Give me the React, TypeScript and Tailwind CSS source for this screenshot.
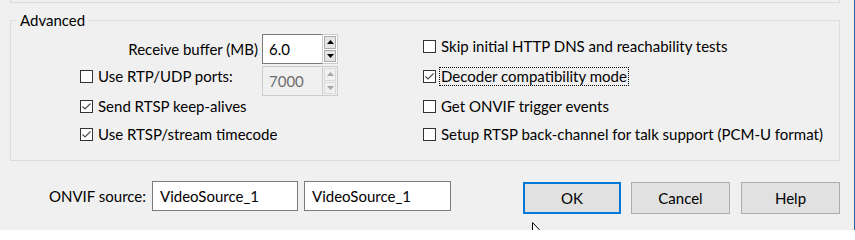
import React from "react";

const FONT = { fontFamily: "Lato, 'Noto Sans', sans-serif" };

function Check({ on }: { on?: boolean }) {
  return (
    <span className="flex h-[13px] w-[13px] shrink-0 items-center justify-center border border-[#333] bg-white">
      {on && (
        <svg width="11" height="11" viewBox="0 0 11 11">
          <polyline points="1.5,5.5 4,8 9.5,2.5" fill="none" stroke="#4d4d4d" strokeWidth="1.2" />
        </svg>
      )}
    </span>
  );
}

function CheckRow({ label, on, focus }: { label: string; on?: boolean; focus?: boolean }) {
  return (
    <div className="flex h-[20px] items-center gap-[3px] leading-[20px]">
      <Check on={on} />
      <span className={focus ? "border border-dotted border-black px-[1px] leading-[17px]" : "px-[2px]"}>{label}</span>
    </div>
  );
}

function Arrow({ up, color }: { up?: boolean; color: string }) {
  return (
    <svg width="7" height="4" viewBox="0 0 7 4">
      <polygon points={up ? "0,4 7,4 3.5,0" : "0,0 7,0 3.5,4"} fill={color} />
    </svg>
  );
}

function SpinBox({ value, disabled }: { value: string; disabled?: boolean }) {
  const edge = disabled ? "border-[#cccccc]" : "border-[#7a7a7a]";
  const btn = disabled ? "border-[#d9d9d9] bg-[#f0f0f0]" : "border-[#adadad] bg-[#e5e5e5]";
  return (
    <div className="flex h-[30px] w-[76px]">
      <div
        className={`flex flex-1 items-center border border-r-0 pl-[6px] ${edge} ${
          disabled ? "bg-[#f0f0f0] text-[#6d6d6d]" : "bg-white text-black"
        }`}
      >
        {value}
      </div>
      <div className={`flex w-[16px] flex-col gap-[1px] border border-[#cccccc] p-[1px] ${disabled ? "bg-[#f0f0f0]" : "bg-white"}`}>
        <div className={`flex flex-1 items-center justify-center border ${btn}`}>
          <Arrow up color={disabled ? "#a6a6a6" : "#000"} />
        </div>
        <div className={`flex flex-1 items-center justify-center border ${btn}`}>
          <Arrow color={disabled ? "#a6a6a6" : "#000"} />
        </div>
      </div>
    </div>
  );
}

function Btn({ label, primary }: { label: string; primary?: boolean }) {
  return (
    <button
      type="button"
      className={`h-[32px] bg-[#e1e1e1] text-black ${
        primary ? "w-[98px] border-2 border-[#0078d7]" : "w-[99px] border border-[#adadad]"
      }`}
    >
      {label}
    </button>
  );
}

export default function App() {
  return (
    <div
      className="relative h-[230px] w-[855px] overflow-hidden border-r border-[#33619e] bg-[#f0f0f0] text-[15px] text-black"
      style={FONT}
    >
      {/* bottom edge of the panel above */}
      <div className="ml-[10px] h-[3px] w-[830px] border-x border-b border-[#dcdcdc]" />

      {/* Advanced group */}
      <fieldset className="ml-[10px] mt-[7px] h-[151px] w-[830px] border border-[#dcdcdc]">
        <legend className="ml-[6px] px-[3px] leading-[20px]">Advanced</legend>
        <div className="flex pl-[69px]">
          {/* left column */}
          <div className="flex w-[258px] flex-col pt-[4px]">
            <div className="flex h-[30px] items-center justify-end gap-[4px]">
              <span>Receive buffer (MB)</span>
              <SpinBox value="6.0" />
            </div>
            <div className="mt-[2px] flex items-start justify-between">
              <CheckRow label="Use RTP/UDP ports:" />
              <SpinBox value="7000" disabled />
            </div>
            <CheckRow label="Send RTSP keep-alives" on />
            <div className="mt-[8px]">
              <CheckRow label="Use RTSP/stream timecode" on />
            </div>
          </div>

          {/* right column */}
          <div className="ml-[85px] flex flex-col pt-[6px]">
            <CheckRow label="Skip initial HTTP DNS and reachability tests" />
            <div className="mt-[10px]">
              <CheckRow label="Decoder compatibility mode" on focus />
            </div>
            <div className="mt-[10px]">
              <CheckRow label="Get ONVIF trigger events" />
            </div>
            <div className="mt-[8px]">
              <CheckRow label="Setup RTSP back-channel for talk support (PCM-U format)" />
            </div>
          </div>
        </div>
      </fieldset>

      {/* bottom row */}
      <div className="mt-[20px] flex items-start pr-[14px]">
        <div className="flex w-[152px] justify-end pr-[6px]">
          <span className="whitespace-nowrap leading-[30px]">ONVIF source:</span>
        </div>
        <div className="flex h-[30px] w-[146px] items-center border border-[#7a7a7a] bg-white pl-[7px]">VideoSource_1</div>
        <div className="ml-[6px] flex h-[30px] w-[147px] items-center border border-[#7a7a7a] bg-white pl-[7px]">VideoSource_1</div>
        <div className="ml-auto mt-[1px] flex gap-[10px]">
          <Btn label="OK" primary />
          <Btn label="Cancel" />
          <div className="ml-[1px]">
            <Btn label="Help" />
          </div>
        </div>
      </div>

      {/* mouse pointer */}
      <svg className="absolute left-[532px] top-[222px]" width="12" height="19" viewBox="0 0 12 19">
        <path d="M0.5,0.5 L0.5,16 L4,12.5 L6.5,18 L8.5,17 L6,11.5 L11,11.5 Z" fill="#fff" stroke="#000" strokeWidth="1" />
      </svg>
    </div>
  );
}
